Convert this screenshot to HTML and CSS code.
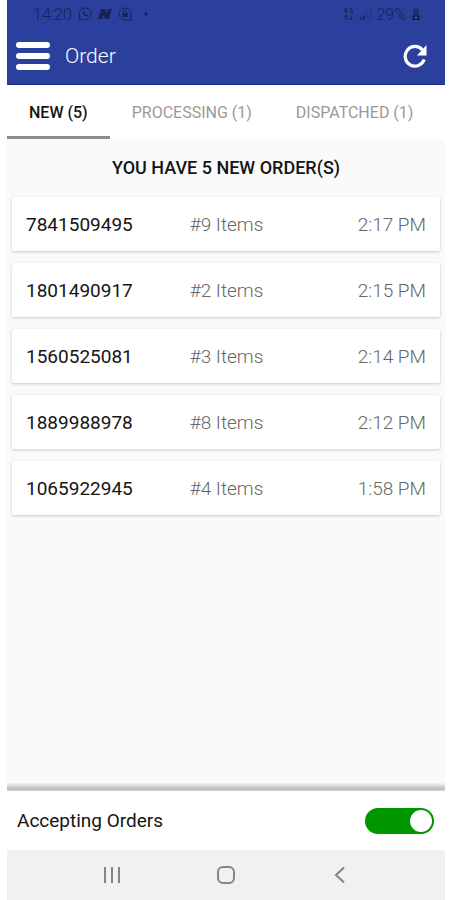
FILE: index.html
```html
<!DOCTYPE html>
<html lang="en">
<head>
<meta charset="utf-8">
<meta name="viewport" content="width=device-width, initial-scale=1">
<title>Order</title>
<link rel="stylesheet" href="styles.css">
</head>
<body>
<div class="app">
  <header class="header">
    <div class="status">
      <div class="status-group">
        <span>14:20</span>
        <svg class="status-icon" viewBox="0 0 14 14" fill="none" stroke="currentColor"><path d="M1 13l1-3a6 6 0 1 1 2 2z"/><path d="M4.700 4c-.7 3 2.300 6 5.300 5.500l.2-1.500-1.600-.8-.8.7L6.200 6.200l.6-.8L6 4z" fill="currentColor" stroke="none"/></svg>
        <svg class="status-icon" viewBox="0 0 14 14" fill="currentColor"><path d="M3 2h4l1.500 4L9.500 2H14l-3 10H7L5.500 8l-1 4H0z"/></svg>
        <svg class="status-icon" viewBox="0 0 14 14" fill="none" stroke="currentColor"><path d="M13 13H7a6 6 0 1 1 6-6z"/><path d="M5.500 6V4.800a1.500 1.500 0 0 1 3 0V6"/><path d="M4.500 6h5v4h-5z" fill="currentColor" stroke="none"/></svg>
        <svg class="status-icon" viewBox="0 0 14 14" fill="currentColor"><circle cx="8" cy="7" r="1.700"/></svg>
      </div>
      <div class="status-group status-right">
        <svg class="status-icon" viewBox="0 0 14 14" fill="none" stroke="currentColor"><path d="M4 1L2 4h3M4.500 1v5M10.500 1.500h-2v4h2v-2M4 13V8L2 10M4 8l2 2M9 8v5l-2-2M9 13l2-2"/></svg>
        <svg class="status-icon" viewBox="0 0 14 14" fill="currentColor"><path d="M1 10h2v3H1zM4 8h2v5H4z" opacity=".7"/><path d="M7.500 5h2v8h-2zM11 2h2v11h-2z" opacity=".25"/></svg>
        <span>29%</span>
        <svg class="status-icon" viewBox="0 0 14 14" fill="currentColor"><path d="M5 1h4v2h1v6h1v4H3V9h1V3h1z" opacity=".55"/><path d="M4 8h6l1 5H3z"/><path d="M6 10h2v1H6z" fill="#7180bd"/></svg>
      </div>
    </div>
    <div class="toolbar">
      <button class="icon-button" type="button" aria-label="Menu">
        <svg class="menu-icon" viewBox="0 0 36 30" stroke="currentColor" stroke-width="6" stroke-linecap="round"><path d="M4 4h28M4 15h28M4 26h28"/></svg>
      </button>
      <h1 class="title">Order</h1>
      <button class="icon-button" type="button" aria-label="Refresh">
        <svg class="refresh-icon" viewBox="0 0 24 24" fill="none" stroke="currentColor" stroke-width="3.200"><path d="M19.500 6A9.800 9.800 0 1 0 21.200 15.500"/><path d="M23.500 1v10.500H14z" fill="currentColor" stroke="none"/></svg>
      </button>
    </div>
  </header>
  <nav class="tabs">
    <button class="tab tab-active" type="button">NEW (5)</button>
    <button class="tab" type="button">PROCESSING (1)</button>
    <button class="tab" type="button">DISPATCHED (1)</button>
  </nav>
  <main class="content">
    <h2 class="heading">YOU HAVE 5 NEW ORDER(S)</h2>
    <ul class="orders">
      <li class="order"><span class="number">7841509495</span><span>#9 Items</span><span class="time">2:17 PM</span></li>
      <li class="order"><span class="number">1801490917</span><span>#2 Items</span><span class="time">2:15 PM</span></li>
      <li class="order"><span class="number">1560525081</span><span>#3 Items</span><span class="time">2:14 PM</span></li>
      <li class="order"><span class="number">1889988978</span><span>#8 Items</span><span class="time">2:12 PM</span></li>
      <li class="order"><span class="number">1065922945</span><span>#4 Items</span><span class="time">1:58 PM</span></li>
    </ul>
  </main>
  <div class="divider"></div>
  <div class="accepting">
    <label for="accepting">Accepting Orders</label>
    <input class="switch" id="accepting" type="checkbox" role="switch" checked>
  </div>
  <nav class="system-nav">
    <button class="nav-button" type="button" aria-label="Recent apps"><svg class="nav-icon" viewBox="0 0 20 20"><path d="M3 2v16M10 2v16M17 2v16"/></svg></button>
    <button class="nav-button" type="button" aria-label="Home"><svg class="nav-icon" viewBox="0 0 20 20"><rect x="2" y="2" width="16" height="16" rx="5"/></svg></button>
    <button class="nav-button" type="button" aria-label="Back"><svg class="nav-icon" viewBox="0 0 20 20"><path d="M14 2.500L6 10l8 7.500"/></svg></button>
  </nav>
</div>
</body>
</html>
```
FILE: styles.css
```css
* {
  box-sizing: border-box;
}

body {
  margin: 0;
  background: #fff;
  color: #151515;
  font-family: Roboto, "Liberation Sans", sans-serif;
}

button {
  border: 0;
  padding: 0;
  background: none;
  color: inherit;
  font: inherit;
}

svg {
  display: block;
}

.app {
  display: flex;
  flex-direction: column;
  min-height: 100vh;
  margin: 0 5px 0 7px;
}

.header {
  background: #2b409c;
  border-bottom: 1px solid #172e93;
  color: #fff;
}

.status {
  display: flex;
  justify-content: space-between;
  height: 28px;
  padding: 0 22px 0 26px;
  color: #172358;
  font-size: 16px;
  font-weight: 300;
}

.status-group {
  display: flex;
  align-items: center;
  gap: 6px;
}

.status-right {
  gap: 3px;
}

.status-icon {
  width: 14px;
  height: 14px;
}

.toolbar {
  display: flex;
  align-items: center;
  height: 56px;
  padding: 0 18px 0 8px;
}

.menu-icon {
  width: 36px;
  height: 30px;
}

.refresh-icon {
  width: 24px;
  height: 24px;
}

.title {
  flex: 1;
  margin: 0 0 0 14px;
  font-size: 21px;
  font-weight: 300;
}

.tabs {
  display: flex;
  height: 54px;
}

.tab {
  padding: 3px 22px 0;
  border-bottom: 3px solid transparent;
  color: #999;
  font-size: 16px;
  white-space: nowrap;
}

.tab-active {
  border-color: #8c8c8c;
  color: #151515;
  font-weight: 500;
}

.content {
  flex: 1;
  padding: 17px 5px;
  background: #fafafa;
}

.heading {
  margin: 0 0 17px;
  font-size: 18px;
  font-weight: 500;
  line-height: 24px;
  text-align: center;
}

.orders {
  display: grid;
  gap: 12px;
  margin: 0;
  padding: 0;
  list-style: none;
}

.order {
  display: grid;
  grid-template-columns: 9fr 7fr 6fr;
  align-items: center;
  height: 54px;
  padding: 0 14px;
  border-radius: 2px;
  background: #fff;
  box-shadow: 0 1px 3px rgb(0 0 0 / 20%);
  color: #666;
  font-size: 19px;
  font-weight: 300;
}

.number {
  color: #151515;
  font-weight: 400;
}

.time {
  text-align: right;
}

.divider {
  height: 8px;
  background: linear-gradient(#f4f4f4, #bcbcbc 75%, #d8d8d8);
}

.accepting {
  display: flex;
  align-items: center;
  justify-content: space-between;
  height: 59px;
  padding: 0 11px 0 10px;
  font-size: 19px;
}

.switch {
  display: flex;
  align-items: center;
  justify-content: flex-end;
  width: 69px;
  height: 26px;
  margin: 0;
  padding: 2px;
  border-radius: 13px;
  background: #009600;
  appearance: none;
}

.switch::before {
  width: 22px;
  height: 22px;
  border-radius: 50%;
  background: #fff;
  content: "";
}

.switch:not(:checked) {
  justify-content: flex-start;
  background: #999;
}

.system-nav {
  display: flex;
  justify-content: center;
  gap: 94px;
  height: 50px;
  background: #f1f1f1;
}

.nav-icon {
  width: 20px;
  height: 20px;
  fill: none;
  stroke: #858585;
  stroke-width: 2;
}
```
